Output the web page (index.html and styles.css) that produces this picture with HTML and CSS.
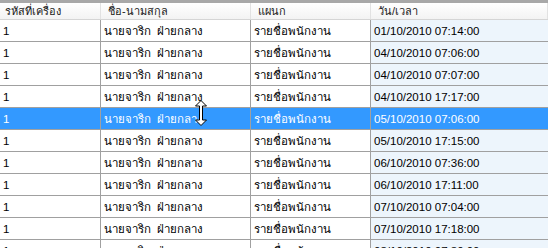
FILE: index.html
```html
<!DOCTYPE html>
<html lang="th">
<head>
<meta charset="utf-8">
<title>Grid</title>
<link rel="stylesheet" href="styles.css">
</head>
<body>
<div class="grid">
  <div class="row head">
    <div class="cell c1">รหัสที่เครื่อง</div>
    <div class="cell c2">ชื่อ-นามสกุล</div>
    <div class="cell c3">แผนก</div>
    <div class="cell c4">วัน/เวลา</div>
  </div>
  <div class="row"><div class="cell c1">1</div><div class="cell c2">นายจาริก&nbsp; ฝ่ายกลาง</div><div class="cell c3">รายชื่อพนักงาน</div><div class="cell c4">01/10/2010 07:14:00</div></div>
  <div class="row"><div class="cell c1">1</div><div class="cell c2">นายจาริก&nbsp; ฝ่ายกลาง</div><div class="cell c3">รายชื่อพนักงาน</div><div class="cell c4">04/10/2010 07:06:00</div></div>
  <div class="row"><div class="cell c1">1</div><div class="cell c2">นายจาริก&nbsp; ฝ่ายกลาง</div><div class="cell c3">รายชื่อพนักงาน</div><div class="cell c4">04/10/2010 07:07:00</div></div>
  <div class="row"><div class="cell c1">1</div><div class="cell c2">นายจาริก&nbsp; ฝ่ายกลาง</div><div class="cell c3">รายชื่อพนักงาน</div><div class="cell c4">04/10/2010 17:17:00</div></div>
  <div class="row selected"><div class="cell c1">1</div><div class="cell c2">นายจาริก&nbsp; ฝ่ายกลาง</div><div class="cell c3">รายชื่อพนักงาน</div><div class="cell c4">05/10/2010 07:06:00</div></div>
  <div class="row"><div class="cell c1">1</div><div class="cell c2">นายจาริก&nbsp; ฝ่ายกลาง</div><div class="cell c3">รายชื่อพนักงาน</div><div class="cell c4">05/10/2010 17:15:00</div></div>
  <div class="row"><div class="cell c1">1</div><div class="cell c2">นายจาริก&nbsp; ฝ่ายกลาง</div><div class="cell c3">รายชื่อพนักงาน</div><div class="cell c4">06/10/2010 07:36:00</div></div>
  <div class="row"><div class="cell c1">1</div><div class="cell c2">นายจาริก&nbsp; ฝ่ายกลาง</div><div class="cell c3">รายชื่อพนักงาน</div><div class="cell c4">06/10/2010 17:11:00</div></div>
  <div class="row"><div class="cell c1">1</div><div class="cell c2">นายจาริก&nbsp; ฝ่ายกลาง</div><div class="cell c3">รายชื่อพนักงาน</div><div class="cell c4">07/10/2010 07:04:00</div></div>
  <div class="row"><div class="cell c1">1</div><div class="cell c2">นายจาริก&nbsp; ฝ่ายกลาง</div><div class="cell c3">รายชื่อพนักงาน</div><div class="cell c4">07/10/2010 17:18:00</div></div>
  <div class="row"><div class="cell c1">1</div><div class="cell c2">นายจาริก&nbsp; ฝ่ายกลาง</div><div class="cell c3">รายชื่อพนักงาน</div><div class="cell c4">08/10/2010 07:30:00</div></div>
  <svg class="cursor" width="12" height="26" viewBox="0 0 12 26" aria-hidden="true">
    <polygon points="6,0.5 11.5,6 7.5,6 7.5,20 11.5,20 6,25.5 0.5,20 4.5,20 4.5,6 0.5,6" fill="#fff" stroke="#000" stroke-width="1" stroke-linejoin="miter"/>
  </svg>
</div>
</body>
</html>
```
FILE: styles.css
```css
html, body {
  margin: 0;
  padding: 0;
  background: #ffffff;
  overflow: hidden;
}
body {
  width: 548px;
  height: 248px;
  font-family: "Liberation Sans", Tahoma, sans-serif;
  font-size: 11.5px;
  color: #000;
}
.grid {
  position: relative;
  width: 548px;
  height: 248px;
  overflow: hidden;
}
.row {
  display: grid;
  grid-template-columns: 101px 150px 120px 1fr;
  height: 22px;
  box-sizing: border-box;
  border-bottom: 1px solid #a0a0a0;
}
.cell {
  box-sizing: border-box;
  border-right: 1px solid #a0a0a0;
  padding-left: 3px;
  display: flex;
  align-items: center;
  white-space: nowrap;
  overflow: hidden;
}
.row .c4 {
  background: #edf5fc;
  border-right: none;
}
.head {
  height: 20px;
  border-top: 3px solid #a8a8a8;
  border-bottom: 1px solid #d5d5d5;
  background: linear-gradient(#ffffff, #f3f3f3);
  font-size: 11px;
}
.head .cell {
  padding-left: 7px;
  border-right: 1px solid #e2e2e2;
  color: #1a1a1a;
}
.head .c1 {
  padding-left: 5px;
}
.head .c4 {
  background: transparent;
}
.selected {
  background: #3399ff;
  color: #ffffff;
}
.selected .c4 {
  background: #3399ff;
}
.cursor {
  position: absolute;
  left: 195px;
  top: 100px;
}
```
